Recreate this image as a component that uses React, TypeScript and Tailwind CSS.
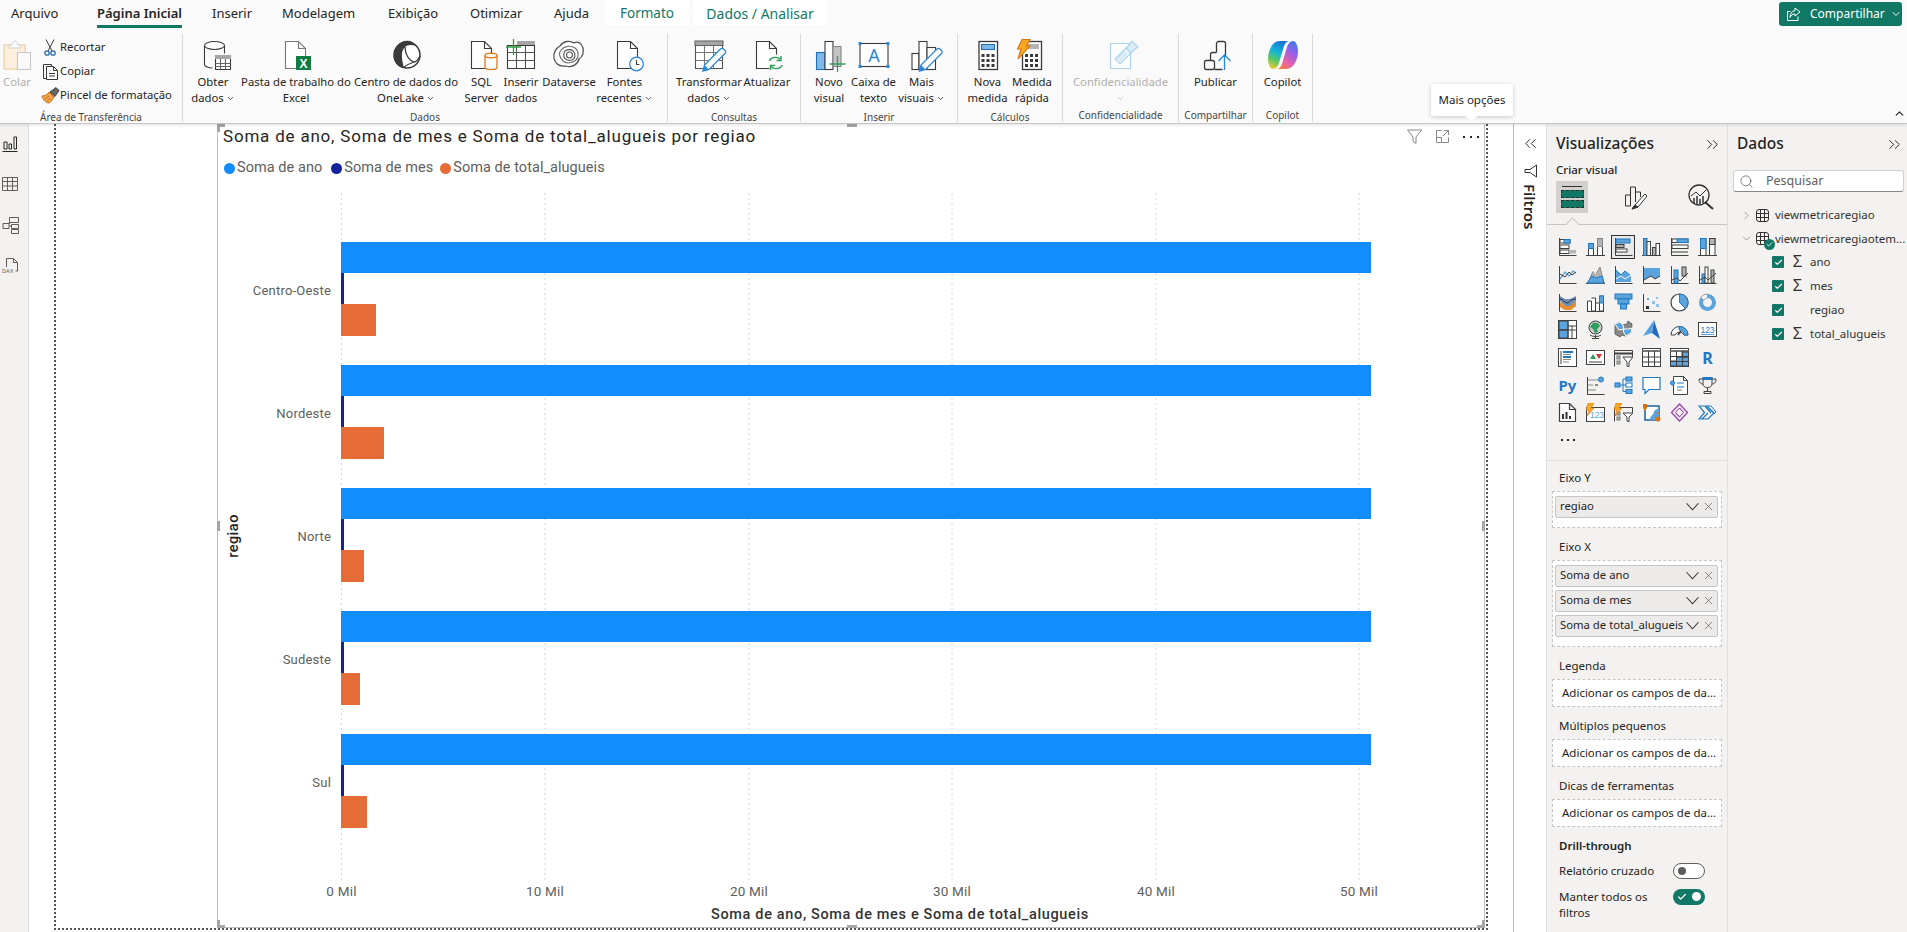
import type { ReactNode } from 'react';
import { ChevronDown, ChevronRight, ChevronUp, ChevronsLeft, ChevronsRight, Search, X, Check } from 'lucide-react';

const S = ({ children, size = 32 }: { children: ReactNode; size?: number }) => (
  <svg className="overflow-visible" width={size} height={size} viewBox={`0 0 ${size} ${size}`} fill="none" stroke="#3b3a39" strokeWidth="1.1">
    {children}
  </svg>
);

const blue = '#2b88d8';
const pageDoc = (x: number, stroke = '#3b3a39') => (
  <path d={`M${x + 0.5} 2.500h13l7 7v20h-20z M${x + 13.5} 2.500v7h7`} fill="#fff" stroke={stroke} />
);
const pencil = (tx: number, ty: number) => (
  <g transform={`translate(${tx} ${ty})`}>
    <path d="M0 0l1.500-6 16-16a2 2 0 013 0l1.500 1.500a2 2 0 010 3l-16 16z" fill="#fff" stroke={blue} strokeWidth="1.300" />
    <path d="M0 0l1.500-6 4.500 4.500z" fill={blue} stroke="none" />
  </g>
);

// ribbon icons
const ObterIcon = (
  <S>
    <path d="M7.500 6.500v19c0 2 4 3.500 8 3.500" fill="#fff" />
    <path d="M27.500 6.500v8" />
    <ellipse cx="17.500" cy="6.500" rx="10" ry="4" fill="#fff" />
    <path d="M18.500 16.500h15v14h-15z" fill="#fff" />
    <path d="M18 16h16v4H18z" fill="#a6a6a6" stroke="none" />
    <path d="M18.500 24.500h15M18.500 27.500h15M23.500 20v10M28.500 20v10" stroke="#666" />
  </S>
);
const ExcelIcon = (
  <S>
    {pageDoc(5, '#777')}
    <rect x="16" y="17" width="15" height="14" fill="#107c41" stroke="none" />
    <text x="23.500" y="28.500" textAnchor="middle" fill="#fff" stroke="none" fontSize="12" fontWeight="700" fontFamily="Liberation Sans, sans-serif">X</text>
  </S>
);
const OneLakeIcon = (
  <S>
    <circle cx="17" cy="16" r="13" fill="#fff" stroke="#3a3a3a" strokeWidth="1.500" />
    <path d="M15 2c5-1 9 1 11 5-5-2-9-1-11 1-4 4-4 10-1 21C7 28 3 22 4 15 5 8 9 3 15 2z" fill="#3a3a3a" stroke="none" />
    <path d="M15 8c0 6 3 13 9 15 2 0 4-2 6-6" stroke="#3a3a3a" strokeWidth="1.300" />
    <path d="M14 28c3-2 7-4 10-5" stroke="#3a3a3a" />
  </S>
);
const SqlIcon = (
  <S>
    {pageDoc(5)}
    <path d="M19 16.500v12c0 1.200 2.500 2 6 2s6-.8 6-2v-12" fill="#fff" stroke="#d9730d" strokeWidth="1.200" />
    <ellipse cx="25" cy="16.500" rx="6" ry="2.300" fill="#fff" stroke="#d9730d" strokeWidth="1.200" />
  </S>
);
const InserirIcon = (
  <S>
    <path d="M2.500 6.500h27v23h-27z" fill="#fff" />
    <rect x="12" y="2" width="18" height="4" fill="#a6a6a6" stroke="none" />
    <path d="M2.500 13.500h27M2.500 21.500h27M11.500 6.500v23M20.500 6.500v23" stroke="#555" />
    <path d="M8.500 0v16M1 8h15" stroke="#2ea043" strokeWidth="1.300" />
  </S>
);
const DataverseIcon = (
  <S>
    <path d="M7 7c3-5 10-6 14-3 3-2 8 0 9 5 1 5-1 9-4 11-1 5-7 9-13 7-6 1-11-2-12-8-1-5 2-10 6-12z" fill="#fff" stroke="#555" strokeWidth="1.300" />
    <path d="M8 11c3-4 10-5 14-2s4 9 1 12-10 4-13 1-5-7-2-11z" stroke="#777" strokeWidth="1.200" />
    <path d="M12 12c3-2 7-2 9 1s1 7-2 8-7 0-8-3 0-4 1-6z" stroke="#555" />
    <circle cx="16.500" cy="16" r="3" stroke="#555" />
  </S>
);
const FontesIcon = (
  <S>
    {pageDoc(8)}
    <circle cx="27.500" cy="25" r="6.800" fill="#fff" stroke={blue} strokeWidth="1.300" />
    <path d="M27.500 21v4.500h3" stroke="#444" />
  </S>
);
const TransformarIcon = (
  <S>
    <path d="M2.500 6.500h27v23h-27z" fill="#fff" stroke="#555" />
    <rect x="2" y="2" width="28" height="4.500" fill="#a6a6a6" stroke="#666" />
    <path d="M2.500 13.500h27M2.500 21.500h27M11.500 6.500v23M20.500 6.500v23" stroke="#777" />
    {pencil(10, 32)}
  </S>
);
const AtualizarIcon = (
  <S>
    {pageDoc(5)}
    <circle cx="24.700" cy="24" r="8.500" fill="#fafafa" stroke="none" />
    <path d="M18.500 22c1-4 8-5 11-1.500M31 26c-1 4-8 5-11 1.500" stroke="#2e9e5b" strokeWidth="1.400" />
    <path d="M30 17v4.500h-4.500M19.500 31v-4.500H24" stroke="#2e9e5b" strokeWidth="1.400" />
  </S>
);
const NovoVisualIcon = (
  <S>
    <rect x="3.500" y="13.500" width="8.500" height="17" fill="#7fb8ea" stroke="#1f6fb5" />
    <rect x="12" y="2.500" width="8" height="28" fill="#fff" />
    <rect x="20" y="7.500" width="8" height="20" fill="#c4c4c4" stroke="#888" />
    <path d="M24.500 17v16M16.500 25h16" stroke="#2e9e5b" strokeWidth="1.300" />
  </S>
);
const TextoIcon = (
  <S>
    <rect x="2" y="4.500" width="28" height="23" fill="#fff" />
    {[[.5, 3], [28.500, 3], [.5, 26], [28.500, 26]].map(([x, y]) => (
      <rect key={`${x}-${y}`} x={x} y={y} width="3" height="3" fill={blue} stroke="none" />
    ))}
    <text x="16" y="22.500" textAnchor="middle" fill={blue} stroke="none" fontSize="18" fontFamily="Noto Sans, sans-serif">A</text>
  </S>
);
const MaisVisuaisIcon = (
  <S>
    <rect x="6" y="14.500" width="7" height="16" fill="#fff" />
    <rect x="13" y="2.500" width="8" height="28" fill="#fff" />
    <rect x="21" y="8.500" width="8.500" height="22" fill="#fff" />
    {pencil(13.500, 32)}
  </S>
);
const keys = [0, 1, 2].flatMap((r) => [0, 1, 2].map((c) => [c, r]));
const NovaMedidaIcon = (
  <S>
    <rect x="7" y="2.500" width="18.500" height="28" fill="#fff" strokeWidth="1.300" />
    <rect x="9.500" y="5.500" width="13" height="5" fill="#7fb8ea" stroke="#1f6fb5" />
    {keys.map(([c, r]) => (
      <rect key={`${c}${r}`} x={9.500 + c * 5} y={15 + r * 5} width="3" height="3" fill="#3b3a39" stroke="none" />
    ))}
  </S>
);
const RapidaIcon = (
  <S>
    <rect x="6.500" y="2.500" width="19" height="28" fill="#fff" strokeWidth="1.300" />
    <rect x="10" y="5" width="13" height="5" fill="#b5b5b5" stroke="none" />
    {keys.map(([c, r]) => (
      <rect key={`${c}${r}`} x={9 + c * 5} y={15 + r * 5} width="3" height="3" fill="#3b3a39" stroke="none" />
    ))}
    <path d="M6 .5h8L10.500 7H14L2 20l3-10H1.500z" fill="#f7a823" stroke="#d9730d" />
  </S>
);
const ConfIcon = (
  <S>
    <path d="M5.500 4.500h20v25h-20z" fill="#fff" stroke="#a8d2ee" strokeWidth="1.200" />
    <path d="M10 20l11-11 5 5-11 11z" fill="#f3f8fc" stroke="#a8d2ee" />
    <path d="M12 20l8-8M14 22l8-8" stroke="#bcdcf2" />
    <path d="M21 9l4-4 2-3 6 6-3 2-4 4z" fill="#dcecf7" stroke="#a8d2ee" />
  </S>
);
const PublicarIcon = (
  <S>
    <rect x="4.500" y="21.500" width="10" height="9" rx="2" fill="#fff" strokeWidth="1.300" />
    <path d="M10.500 21.500v-6a2 2 0 012-2h4M14.500 30.500h8M16.500 13.500v-9a2 2 0 012-2h5a2 2 0 012 2v13" strokeWidth="1.300" />
    <path d="M24.500 31V16M18.500 22l6-6 6 6" stroke={blue} strokeWidth="1.300" />
  </S>
);
const CopilotIcon = (
  <svg width="32" height="32" viewBox="0 0 32 32">
    <defs>
      <linearGradient id="cpa" x1="0.600" y1="0" x2="0.200" y2="1">
        <stop offset="0" stopColor="#1b6fd6" />
        <stop offset="0.400" stopColor="#12b5d8" />
        <stop offset="0.700" stopColor="#5cc765" />
        <stop offset="1" stopColor="#f4c92e" />
      </linearGradient>
      <linearGradient id="cpb" x1="0.800" y1="0" x2="0.200" y2="1">
        <stop offset="0" stopColor="#3a7be8" />
        <stop offset="0.350" stopColor="#9b5fe8" />
        <stop offset="0.700" stopColor="#e860a8" />
        <stop offset="1" stopColor="#f0803c" />
      </linearGradient>
    </defs>
    <path d="M13 2h10c-3 0-5 2-6 5l-5 17c-1 3-3 6-6 6-3 0-5-5-5-10C1 12 5 2 13 2z" fill="url(#cpa)" />
    <path d="M19 30H9c3 0 5-2 6-5l5-17c1-3 3-6 6-6 3 0 5 5 5 10 0 8-4 18-12 18z" fill="url(#cpb)" />
  </svg>
);

// small ribbon icons
const Scissors = (
  <svg width="12" height="17" viewBox="0 0 12 17" fill="none" stroke="#3b3a39">
    <path d="M2 .5l6 11.500M10 .5L4 12" />
    <circle cx="3" cy="14" r="2.200" stroke="#2b6cb0" strokeWidth="1.300" />
    <circle cx="9" cy="14" r="2.200" stroke="#2b6cb0" strokeWidth="1.300" />
  </svg>
);
const CopyDoc = (
  <svg width="17" height="17" viewBox="0 0 17 17" fill="none" stroke="#3b3a39">
    <path d="M4.500 15.500h-3v-14h8v2" />
    <path d="M4.500 3.500h7l4 4v9h-11z M11.500 3.500v4h4 M7 10.500h6M7 13h6" fill="#fff" />
  </svg>
);
const Brush = (
  <svg width="19" height="17" viewBox="0 0 19 17" fill="none">
    <path d="M1 9c3 0 5-1 7-4l5 5c-1 2-3 5-5 6-3 0-6-3-7-7z" fill="#f3a64c" stroke="#c8701a" />
    <path d="M4 12l4-3M6 14l4-3" stroke="#c8701a" />
    <path d="M9 5l6-4.500 3 3-4 6z" fill="#666" stroke="#444" />
  </svg>
);
const Clipboard = (
  <svg width="28" height="32" viewBox="0 0 28 32" fill="none">
    <path d="M1 6h21v24H1z" fill="#fcefdd" stroke="#f2d6ae" strokeWidth="1.500" />
    <path d="M6 6h3c0-2 1-4 3-4s3 2 3 4h3v3H6z" fill="#fafafa" stroke="#cfcfcf" />
    <rect x="14.500" y="13.500" width="13" height="17" fill="#fafafa" stroke="#c8c6c4" />
  </svg>
);

// visualization gallery, 18x18
const L = '#404040';
const B = '#5ba3dd';
const G = '#b3b3b3';
const V = ({ children }: { children: ReactNode }) => (
  <svg width="19" height="19" viewBox="0 0 19 19" fill="none" stroke={L} strokeWidth="1">
    {children}
  </svg>
);
const axisL = <path d="M1.500 1v17.500h17" />;
const gallery: ReactNode[] = [
  <V>{axisL}<rect x="2" y="2.500" width="10" height="3.500" fill="#fff" /><rect x="6" y="2.500" width="6" height="3.500" fill={B} stroke="#1f78c1" /><rect x="2" y="8" width="9" height="3.500" fill="#fff" /><rect x="2" y="13" width="9" height="3.500" fill="#fff" /><rect x="11" y="13" width="7" height="3.500" fill={G} stroke="none" /></V>,
  <V><path d="M0 18.500h19" /><rect x="2.500" y="10.500" width="5" height="8" fill="#fff" /><rect x="2.500" y="6.500" width="5" height="5" fill={B} stroke="#1f78c1" /><rect x="11.500" y="1.500" width="5" height="17" fill="#fff" /><rect x="11.500" y="1.500" width="5" height="8" fill={G} stroke="#888" /></V>,
  <V>{axisL}<rect x="2" y="2" width="14" height="4" fill={B} stroke="#1f78c1" /><rect x="2" y="7.500" width="8" height="3" fill={G} /><rect x="2" y="12" width="11" height="3" fill="#fff" /></V>,
  <V><path d="M0 18.500h19" /><rect x="1.500" y="1.500" width="3.500" height="17" fill={B} stroke="#1f78c1" /><rect x="5" y="4.500" width="3.500" height="14" fill="#fff" /><rect x="10.500" y="10.500" width="3.500" height="8" fill={G} /><rect x="14" y="6.500" width="3.500" height="12" fill="#fff" /></V>,
  <V>{axisL}<rect x="2" y="2" width="16" height="3.500" fill="#fff" /><rect x="7" y="2" width="11" height="3.500" fill={B} stroke="#1f78c1" /><rect x="2" y="8" width="16" height="3.500" fill="#fff" /><path d="M2 15h16" /></V>,
  <V><path d="M0 18.500h19" /><rect x="2.500" y="1.500" width="5.500" height="17" fill="#fff" /><rect x="2.500" y="1.500" width="5.500" height="10" fill={B} stroke="#1f78c1" /><rect x="11.500" y="1.500" width="5.500" height="17" fill="#fff" /><rect x="11.500" y="1.500" width="5.500" height="6" fill={G} /></V>,
  <V>{axisL}<path d="M2 14l5-7 4 4 4-5 3 2" stroke={B} strokeWidth="1.300" /><path d="M2 9l5 3 4-5 3 3 4-3" /></V>,
  <V><path d="M0 18.500h19" /><path d="M2 18l5-12 3 3 4-7 4 16z" fill={G} stroke="#888" /><path d="M1 18l5-7 4 2 6-2 2 7z" fill={B} stroke="#1f78c1" /><path d="M5 8l2-3 3 4" stroke="#fff" /></V>,
  <V><path d="M1.500 1v17.500h17" /><path d="M2 5l5 5 4-4 6 5v6H2z" fill={B} stroke="none" /><path d="M2 5l5 5 4-4 6 5" stroke="#1f78c1" /><path d="M2 14l5-3 4 3 6-4" stroke="#fff" /></V>,
  <V><path d="M1.500 1v17.500h17" /><path d="M2 3h16v8l-5 3-4-3-7 4z" fill={B} stroke="none" /><path d="M2 15l7-4 4 3 5-3" stroke={L} /></V>,
  <V>{axisL}<rect x="4" y="5" width="4" height="13" fill={B} stroke="#1f78c1" /><rect x="12" y="2" width="4" height="9" fill={G} /><path d="M2 15l5-2 3 3 8-8" /></V>,
  <V>{axisL}<rect x="4" y="9" width="3" height="9" fill={B} stroke="#1f78c1" /><rect x="7" y="2" width="3" height="16" fill="#fff" /><rect x="13" y="5" width="3" height="13" fill={G} /><path d="M2 15l5-3 3 3 8-7" /></V>,
  <V>{axisL}<path d="M2 3l5 3h5l6-3v5l-5 5H7L2 8z" fill="#6d8fb5" stroke="none" /><path d="M2 9l5 4h5l6-5v5l-5 4H7l-5-3z" fill="#e88a2d" stroke="none" /><path d="M2 6c4 0 4 4 7 4s3-4 9-4" stroke="#333" /></V>,
  <V><path d="M1 18.500h17" /><path d="M1.500 18V8h4v10 M5.500 5h4v13h-4 M9.500 10h4v8 M13.500 3h4v15h-4" fill="#fff" /><rect x="13.500" y="3" width="4" height="7" fill={B} stroke="#1f78c1" /></V>,
  <V><rect x="1" y="1" width="17" height="5" fill={B} stroke="#1f78c1" /><rect x="4" y="6" width="11" height="5" fill={B} stroke="#1f78c1" /><rect x="6.500" y="11" width="6" height="5" fill={B} stroke="#1f78c1" /></V>,
  <V>{axisL}<rect x="4" y="13" width="3" height="3" fill="#333" stroke="none" /><rect x="5" y="5" width="2" height="2" fill={B} stroke="none" /><rect x="10" y="8" width="3" height="3" fill="#8fc1ea" stroke="none" /><rect x="14" y="4" width="2" height="2" fill="#8fc1ea" stroke="none" /><rect x="14" y="11" width="3" height="3" fill="#8fc1ea" stroke="none" /></V>,
  <V><circle cx="9.500" cy="9.500" r="8.500" fill="#fff" strokeWidth="1.200" /><path d="M9.500 9.500V1a8.500 8.500 0 016 14.500z" fill={B} stroke="#1f78c1" /></V>,
  <V><circle cx="9.500" cy="9.500" r="6.500" stroke={B} strokeWidth="4" /><path d="M9.500 1a8.500 8.500 0 00-7 4l3.500 2a4.500 4.500 0 013.500-2z" fill="#fff" stroke="#999" /></V>,
  <V><rect x=".5" y=".5" width="18" height="18" fill="#fff" /><rect x="1" y="1" width="9" height="9" fill={B} /><rect x="1" y="10" width="9" height="8" fill={B} /><path d="M10 .5v18M.5 10h18M10 6h8M14 6v12" /></V>,
  <V><circle cx="9.500" cy="7.500" r="6.500" fill="#cfcfcf" /><path d="M7 3c3-1 6 0 7 3l-3 3 1 3-3 1-2-4-3-2z" fill="#2e9e5b" stroke="none" /><path d="M4 15c3 2 8 2 11 0M9.500 15v3M6 18.500h7" /></V>,
  <V><path d="M1 4l5-2 3 3 4-1 1-3 4 3-1 9-5 3-4-1-2 2-5-3z" fill="#8a8886" stroke="#666" /><path d="M1 4l5-2 3 3 1 4-5 1z" fill={B} stroke="#fff" /><path d="M9 9h6l3-1-1 5-5 3-2-3z" fill={B} stroke="#fff" /></V>,
  <V><path d="M12 0l6 19-8-6z" fill="#1f6ec1" stroke="none" /><path d="M12 0L1 16l9-3z" fill="#5ba3dd" stroke="none" /></V>,
  <V><path d="M1 15a8.500 8.500 0 0117 0h-4a5 5 0 00-9 0z" fill="#fff" /><path d="M9 6.500a8.500 8.500 0 019 8.500h-4a5 5 0 00-5-5z" fill={B} stroke="#1f78c1" /><path d="M8 15l3-4" strokeWidth="1.500" /></V>,
  <V><rect x=".5" y="2.500" width="18" height="14" fill="#fff" /><text x="9.500" y="12.500" textAnchor="middle" fontSize="8.500" fill="#1f78c1" stroke="none" fontFamily="Liberation Sans, sans-serif">123</text><path d="M3 14.500h13" stroke={B} /></V>,
  <V><rect x=".5" y=".5" width="18" height="18" fill="#fff" /><path d="M3 3v13" /><path d="M5 4h10M5 9h8" stroke="#1f78c1" strokeWidth="2" /><path d="M5 6.500h8M5 11.500h8M5 14h6" stroke="#888" /></V>,
  <V><rect x=".5" y="2.500" width="18" height="14" fill="#fff" /><path d="M4 11l3-5 3 5z" fill="#2e9e5b" stroke="none" /><path d="M10 6h6l-3 5z" fill="#d13438" stroke="none" /><path d="M3 14h13" /></V>,
  <V><path d="M.5 18.500v-16h18v6" /><path d="M.5 5.500h18" strokeWidth="2" /><rect x="3" y="8" width="3" height="3" fill="#bbb" stroke="#777" /><rect x="3" y="13" width="3" height="3" fill="#bbb" stroke="#777" /><path d="M9 9h10l-4 5v5l-2-1v-4z" fill="#fff" /></V>,
  <V><rect x=".5" y=".5" width="18" height="18" fill="#fff" /><path d="M.5 3h18" strokeWidth="2" stroke="#777" /><path d="M.5 9h18M.5 14h18M6.500 3v15M12.500 3v15" /></V>,
  <V><rect x=".5" y=".5" width="18" height="18" fill="#fff" /><path d="M.5 3h18" strokeWidth="2" stroke="#777" /><rect x="6.500" y="9" width="12" height="9" fill={B} /><rect x="12" y="4" width="6.500" height="5" fill={B} /><rect x=".5" y="13" width="6" height="5" fill={B} /><path d="M.5 8.500h18M.5 13.500h18M6.500 3v15M12.500 3v15" /></V>,
  <V><text x="9.500" y="16" textAnchor="middle" fontSize="16" fontWeight="700" fill="#1f78c1" stroke="none" fontFamily="Noto Sans, sans-serif">R</text></V>,
  <V><text x="9.500" y="14.500" textAnchor="middle" fontSize="15" fontWeight="700" fill="#1f78c1" stroke="none" fontFamily="Noto Sans, sans-serif">Py</text></V>,
  <V>{axisL}<path d="M2 4h11M2 9h5M2 14h8" stroke="#888" /><circle cx="15" cy="3.500" r="2.500" fill={B} stroke="#1f78c1" /><rect x="9" y="8" width="3" height="2" fill="#888" stroke="none" /></V>,
  <V><rect x="1" y="7" width="5" height="4" fill={B} stroke="#1f78c1" /><rect x="12" y="1" width="6" height="4" fill={B} stroke="#1f78c1" /><rect x="12" y="7" width="6" height="4" fill="#fff" stroke="#1f78c1" /><rect x="12" y="13.500" width="6" height="4" fill={B} stroke="#1f78c1" /><path d="M6 9h6M9 3v12.500M9 3h3M9 15.500h3" stroke="#1f78c1" /></V>,
  <V><path d="M1 1.500h17v12H7l-4 4v-4H1z" fill="#fff" stroke="#1f78c1" strokeWidth="1.200" /></V>,
  <V><path d="M3.500.5h10l4 4v14h-14z M13.500.5v4h4" fill="#fff" /><circle cx="2.500" cy="7" r="2" fill={B} stroke="#1f78c1" /><path d="M7 7h7M7 11h7" stroke="#1f78c1" /><path d="M7 14h5" stroke="#777" /></V>,
  <V><path d="M5 1.500h9v6c0 3-2 4-4.500 4S5 10.500 5 7.500zM5 3H1c0 4 2 5 4 5M14 3h4c0 4-2 5-4 5M9.500 12v3M6 15.500h7v2H6z" /><rect x="5" y="1.500" width="9" height="2" fill="#1f78c1" stroke="#1f78c1" /></V>,
  <V><path d="M1.500.5h10l6 6v12h-16z M11.500.5v6h6" fill="#fff" strokeWidth="1.200" /><path d="M5 11v5M8.500 9v7M12 13v3" stroke="#333" strokeWidth="2" /></V>,
  <V><rect x=".5" y="4.500" width="18" height="14" fill="#fff" /><text x="11" y="15" textAnchor="middle" fontSize="8.500" fill="#5ba3dd" stroke="none" fontFamily="Liberation Sans, sans-serif">123</text><path d="M2 0h6L5 5h3L1 13l2-6H0z" fill="#f7a823" stroke="#d9730d" strokeWidth=".6" /></V>,
  <V><path d="M.5 18.500v-14h18v5" /><rect x="3" y="9" width="3" height="3" fill="#bbb" stroke="#777" /><rect x="3" y="14" width="3" height="3" fill="#bbb" stroke="#777" /><path d="M9 10h10l-4 4v5l-2-1v-4z" fill="#fff" /><path d="M2 0h6L5 5h3L1 13l2-6H0z" fill="#f7a823" stroke="#d9730d" strokeWidth=".6" /></V>,
  <V><path d="M3 3h14v14H3z" fill="#fff" stroke="#1f5f9f" strokeWidth="1.500" /><path d="M8 17c0-5 3-4 4-8 1-3 3-3 5-3v11z" fill="#5ba3dd" stroke="none" /><path d="M1 1h4v4L3 8 1 5z" fill="#d9730d" stroke="none" /><circle cx="16" cy="16" r="2.500" fill="#d9730d" stroke="none" /><rect x="16" y="9" width="2" height="2" fill="#d9730d" stroke="none" /></V>,
  <V><path d="M9.500 1l8 8.500-8 8.500-8-8.500z" stroke="#9a3fae" strokeWidth="1.300" /><path d="M9.500 5l4 4.500-4 4.500-4-4.500zM5.500 9.500l4 4.500M13.500 9.500l-4-4.500" stroke="#9a3fae" /></V>,
  <V><path d="M1 3h8l7 7-6 6H1l5.500-6.500zM7 3l6 7M4 16l6-6" stroke="#1f78c1" strokeWidth="1.200" /><path d="M9 3h4l5 6-2 2z" stroke="#1f78c1" /></V>,
];

const Sigma = () => <span className="w-[13px] text-center font-['Liberation_Sans',sans-serif] text-[16px] leading-none text-[#323130]">Σ</span>;

const TableGlyph = () => (
  <svg width="13" height="13" viewBox="0 0 13 13" fill="none" stroke="#323130">
    <rect x=".5" y=".5" width="12" height="12" rx="2.500" />
    <path d="M4.500.5v12M8.500.5v12M.5 4.500h12M.5 8.500h12" />
  </svg>
);

const Thin = ({ d, size = 12, stroke = '#605e5c' }: { d: string; size?: number; stroke?: string }) => (
  <svg width={size} height={size} viewBox="0 0 12 12" fill="none" stroke={stroke} strokeWidth="1">
    <path d={d} />
  </svg>
);

function RibbonBtn({ w, lines, icon, more, off }: { w: number; lines: string[]; icon: ReactNode; more?: boolean; off?: boolean }) {
  return (
    <div className="flex shrink-0 flex-col items-center" style={{ width: w }}>
      <div className="mb-[2px] flex h-[34px] items-center justify-center">{icon}</div>
      {lines.map((t, i) => (
        <div key={t} className={`flex h-4 items-center whitespace-nowrap text-[11.3px] ${off ? 'text-[#b3b0ad]' : 'text-[#252423]'}`}>
          {t}
          {more && i === lines.length - 1 && <ChevronDown size={9} strokeWidth={2} className="ml-[2px]" />}
        </div>
      ))}
    </div>
  );
}

function GroupLabel({ label }: { label: string }) {
  return <div className="mt-[4px] h-[14px] text-center text-[10px] leading-[14px] text-[#484644]">{label}</div>;
}

function Group({ w, pl = 0, label, children, center }: { w: number; pl?: number; label: string; children: ReactNode; center?: boolean }) {
  return (
    <div className="flex h-[88px] shrink-0 flex-col border-r border-[#d9d9d9]" style={{ width: w }}>
      <div className={`flex h-[72px] pt-[4px] ${center ? 'justify-center' : ''}`} style={{ paddingLeft: pl }}>
        {children}
      </div>
      <GroupLabel label={label} />
    </div>
  );
}

function Field({ label }: { label: string }) {
  return (
    <div className="mx-[2px] mb-[3px] flex h-[22px] w-[163px] items-center rounded-[2px] border border-[#c8c6c4] bg-[#edebe9] pl-1 text-[11.3px] text-[#252423]">
      <span className="flex-1 whitespace-nowrap">{label}</span>
      <Thin d="M.5 3l5.500 6 5.500-6" size={13} stroke="#323130" />
      <X size={13} strokeWidth={1} className="ml-[3px] mr-[2px] text-[#323130]" />
    </div>
  );
}

const tabs: [string, string][] = [
  ['Arquivo', 'ml-[11px] w-[86px]'],
  ['Página Inicial', 'w-[115px]'],
  ['Inserir', 'w-[70px]'],
  ['Modelagem', 'w-[106px]'],
  ['Exibição', 'w-[82px]'],
  ['Otimizar', 'w-[84px]'],
  ['Ajuda', 'w-[51px]'],
];

const regions = [
  { name: 'Centro-Oeste', end: 376 },
  { name: 'Nordeste', end: 384 },
  { name: 'Norte', end: 364 },
  { name: 'Sudeste', end: 360 },
  { name: 'Sul', end: 367 },
];
const ticks = [
  ['0 Mil', 341.5],
  ['10 Mil', 545],
  ['20 Mil', 749],
  ['30 Mil', 952],
  ['40 Mil', 1156],
  ['50 Mil', 1359],
] as const;

const chartFont = 'Roboto, sans-serif';

export default function App() {
  return (
    <div className="flex h-[932px] w-[1907px] flex-col overflow-hidden bg-white font-['Noto_Sans',sans-serif] text-[#252423]">
      {/* ribbon */}
      <div className="relative z-10 shrink-0 border-b border-[#c8c6c4] bg-[#fafafa] shadow-[0_1px_3px_rgba(0,0,0,0.12)]">
        <div className="flex h-[34px] items-start">
          {tabs.map(([t, cls]) => (
            <div key={t} className={`flex h-[28px] shrink-0 items-center text-[13px] ${cls}`}>
              {t === 'Página Inicial' ? (
                <span className="flex h-[28px] items-center border-b-[3px] border-[#117865] pt-[3px] font-semibold">{t}</span>
              ) : (
                t
              )}
            </div>
          ))}
          <div className="flex h-[26px] w-[84px] shrink-0 items-center bg-white pl-[15px] text-[13.5px] text-[#117865]">Formato</div>
          <div className="ml-[4px] flex h-[26px] w-[134px] shrink-0 items-center justify-center bg-white text-[14px] text-[#117865]">Dados / Analisar</div>
          <div className="ml-auto mr-[5px] mt-[2px] flex h-[24px] w-[123px] items-center rounded-[3px] bg-[#117865] pl-[7px] text-[12px] text-white">
            <svg width="15" height="15" viewBox="0 0 15 15" fill="none" stroke="#fff">
              <path d="M12 9.500v4H1.500v-9h3" />
              <path d="M9 1l5 4-5 4V7C6 7 5 8.500 4 10.500 4 6.500 6 4 9 3.500z" />
            </svg>
            <span className="ml-[9px]">Compartilhar</span>
            <ChevronDown size={12} className="ml-[5px]" />
          </div>
        </div>

        <div className="flex h-[89px] items-start">
          <div className="flex h-[88px] w-[183px] shrink-0 flex-col border-r border-[#d9d9d9]">
            <div className="flex h-[72px] pl-[3px] pt-[4px]">
              <RibbonBtn w={28} lines={['Colar']} icon={Clipboard} off />
              <div className="ml-[9px] flex -translate-y-[3px] flex-col">
                <div className="flex h-[24px] shrink-0 items-center text-[11.3px]">
                  <span className="flex w-[20px] justify-center">{Scissors}</span>Recortar
                </div>
                <div className="flex h-[24px] shrink-0 items-center text-[11.3px]">
                  <span className="flex w-[20px] justify-center">{CopyDoc}</span>Copiar
                </div>
                <div className="flex h-[24px] shrink-0 items-center whitespace-nowrap text-[11.3px]">
                  <span className="flex w-[20px] justify-center">{Brush}</span>Pincel de formatação
                </div>
              </div>
            </div>
            <GroupLabel label="Área de Transferência" />
          </div>
          <Group w={485} pl={7} label="Dados">
            <RibbonBtn w={46} lines={['Obter', 'dados']} icon={ObterIcon} more />
            <RibbonBtn w={120} lines={['Pasta de trabalho do', 'Excel']} icon={ExcelIcon} />
            <RibbonBtn w={100} lines={['Centro de dados do', 'OneLake']} icon={OneLakeIcon} more />
            <div className="w-[6px]" />
            <RibbonBtn w={39} lines={['SQL', 'Server']} icon={SqlIcon} />
            <RibbonBtn w={40} lines={['Inserir', 'dados']} icon={InserirIcon} />
            <RibbonBtn w={56} lines={['Dataverse']} icon={DataverseIcon} />
            <RibbonBtn w={55} lines={['Fontes', 'recentes']} icon={FontesIcon} more />
          </Group>
          <Group w={133} pl={10} label="Consultas">
            <RibbonBtn w={62} lines={['Transformar', 'dados']} icon={TransformarIcon} more />
            <RibbonBtn w={54} lines={['Atualizar']} icon={AtualizarIcon} />
          </Group>
          <Group w={157} pl={6} label="Inserir">
            <RibbonBtn w={44} lines={['Novo', 'visual']} icon={NovoVisualIcon} />
            <RibbonBtn w={45} lines={['Caixa de', 'texto']} icon={TextoIcon} />
            <RibbonBtn w={51} lines={['Mais', 'visuais']} icon={MaisVisuaisIcon} more />
          </Group>
          <Group w={105} pl={7} label="Cálculos">
            <RibbonBtn w={45} lines={['Nova', 'medida']} icon={NovaMedidaIcon} />
            <RibbonBtn w={44} lines={['Medida', 'rápida']} icon={RapidaIcon} />
          </Group>
          <Group w={116} label="Confidencialidade" center>
            <div className="flex flex-col items-center">
              <RibbonBtn w={100} lines={['Confidencialidade']} icon={ConfIcon} off />
              <ChevronDown size={9} className="mt-[4px] text-[#b3b0ad]" />
            </div>
          </Group>
          <Group w={74} label="Compartilhar" center>
            <RibbonBtn w={60} lines={['Publicar']} icon={PublicarIcon} />
          </Group>
          <Group w={60} label="Copilot" center>
            <RibbonBtn w={50} lines={['Copilot']} icon={CopilotIcon} />
          </Group>
          <ChevronUp size={13} strokeWidth={2.5} className="ml-auto mr-[1px] mt-[73px] text-[#323130]" />
        </div>
      </div>

      <div className="flex min-h-0 flex-1">
        {/* left rail */}
        <div className="flex w-[29px] shrink-0 flex-col gap-[24px] border-r border-[#e1dfdd] bg-[#f3f2f1] pl-[2px] pt-[12px]">
          <svg width="16" height="16" viewBox="0 0 16 16" fill="none" stroke="#252423">
            <path d="M.5 15.500h15M2 13V6h3v7zM7 13V8h2.500v5zM12 13V1h2.500v12z" />
          </svg>
          <svg width="16" height="16" viewBox="0 0 16 16" fill="none" stroke="#605e5c">
            <path d="M.5 1.500h15v13H.5zM.5 5.500h15M.5 10h15M5.500 1.500v13M10.500 1.500v13" />
          </svg>
          <svg width="18" height="18" viewBox="0 0 18 18" fill="none" stroke="#605e5c">
            <path d="M7.500 1.500h9v5h-9zM1 7.500h6v5H1zM9.500 8.500h7v4h-7zM9.500 13.500h7v4h-7zM7 10h2.500M7.500 4v4" />
          </svg>
          <svg width="17" height="17" viewBox="0 0 17 17" fill="none" stroke="#605e5c">
            <path d="M4.500 9V.5h7l4 4V13h-2M11.500.5v4h4" />
            <text x="0" y="15" fontSize="5.500" fill="#605e5c" stroke="none" fontFamily="Liberation Sans, sans-serif">DAX</text>
          </svg>
        </div>

        {/* report canvas */}
        <div className="relative min-w-0 flex-1 bg-white">
          {/* selection outline */}
          <div className="absolute bottom-[2px] left-[25px] right-[25px] top-0 border-[2px] border-t-0 border-dotted border-[#555]" />
          {/* visual */}
          <div className="absolute bottom-[4px] left-[188px] right-[28px] top-0 border-x border-b border-[#bfbfbf] bg-white">
            <svg className="absolute left-[-1px] top-0" width="1268" height="804" viewBox="217 124 1268 804" style={{ fontFamily: chartFont }}>
              {ticks.map(([label, x]) => (
                <g key={label}>
                  <line x1={x} x2={x} y1="193" y2="880" stroke="#d6d6d6" strokeDasharray="2 3" />
                  <text x={x} y="896" textAnchor="middle" fontSize="13.500" letterSpacing=".2" fill="#605e5c">
                    {label}
                  </text>
                </g>
              ))}
              {regions.map((r, i) => (
                <g key={r.name}>
                  <rect x="341" y={242 + i * 123} width="1030" height="31" fill="#118dff" />
                  <rect x="341" y={273 + i * 123} width="3" height="31" fill="#12239e" />
                  <rect x="341" y={304 + i * 123} width={r.end - 341} height="32" fill="#e66c37" />
                  <text x="331" y={295 + i * 123} textAnchor="end" fontSize="13" letterSpacing=".2" fill="#605e5c">
                    {r.name}
                  </text>
                </g>
              ))}
              <text x="900" y="919" textAnchor="middle" fontSize="14.500" fontWeight="500" letterSpacing=".65" fill="#333">
                Soma de ano, Soma de mes e Soma de total_alugueis
              </text>
              <text transform="translate(238 536) rotate(-90)" textAnchor="middle" fontSize="14.500" fontWeight="500" letterSpacing=".5" fill="#252423">
                regiao
              </text>
            </svg>
            <div className="absolute left-[5px] top-[2px] whitespace-nowrap font-['Roboto',sans-serif] text-[17px] leading-[20px] tracking-[0.8px] text-[#252423]">
              Soma de ano, Soma de mes e Soma de total_alugueis por regiao
            </div>
            <div className="absolute left-[6px] top-[35px] flex items-center whitespace-nowrap font-['Roboto',sans-serif] text-[14.5px] leading-[18px] tracking-[0.05px] text-[#605e5c]">
              <span className="mr-[2px] h-[11px] w-[11px] rounded-full bg-[#118dff]" />
              <span className="mr-[9px]">Soma de ano</span>
              <span className="mr-[2px] h-[11px] w-[11px] rounded-full bg-[#12239e]" />
              <span className="mr-[7px]">Soma de mes</span>
              <span className="mr-[2px] h-[11px] w-[11px] rounded-full bg-[#e66c37]" />
              <span>Soma de total_alugueis</span>
            </div>
            {/* visual header */}
            <div className="absolute right-[5px] top-[5px] flex items-center gap-[13px]">
              <svg width="15" height="15" viewBox="0 0 15 15" fill="none" stroke="#8a8886">
                <path d="M.5 1h14L9 8v6.500l-3-2V8z" />
              </svg>
              <svg width="15" height="15" viewBox="0 0 15 15" fill="none" stroke="#8a8886">
                <path d="M6.500 1.500h-5v12h12v-5M1.500 8.500h5v5M9 1.500h4.500V6M13.500 1.500L8 7" />
              </svg>
              <div className="flex w-[16px] justify-between">
                <span className="h-[2px] w-[2px] bg-[#252423]" />
                <span className="h-[2px] w-[2px] bg-[#252423]" />
                <span className="h-[2px] w-[2px] bg-[#252423]" />
              </div>
            </div>
            {/* resize handles */}
            <div className="absolute left-[-1px] top-0 h-[8px] w-[8px] border-l-[3px] border-t-[3px] border-[#a6a6a6]" />
            <div className="absolute bottom-[-1px] left-[-1px] h-[8px] w-[8px] border-b-[3px] border-l-[3px] border-[#a6a6a6]" />
            <div className="absolute bottom-[-1px] right-[-1px] h-[8px] w-[8px] border-b-[3px] border-r-[3px] border-[#a6a6a6]" />
            <div className="absolute left-[629px] top-0 h-[3px] w-[10px] bg-[#a6a6a6]" />
            <div className="absolute bottom-[-1px] left-[629px] h-[3px] w-[10px] bg-[#a6a6a6]" />
            <div className="absolute left-[-1px] top-[397px] h-[10px] w-[3px] bg-[#a6a6a6]" />
            <div className="absolute right-[-1px] top-[397px] h-[10px] w-[3px] bg-[#a6a6a6]" />
          </div>
        </div>

        {/* filters */}
        <div className="flex w-[33px] shrink-0 flex-col items-center border-l border-[#b8b8b8] bg-white pt-[10px] text-[#252423]">
          <ChevronsLeft size={19} strokeWidth={1.2} />
          <svg className="mt-[11px]" width="13" height="14" viewBox="0 0 13 14" fill="none" stroke="#323130">
            <path d="M12.500 1v12L6 8.500H1L1 5.500h5z" />
          </svg>
          <div className="mt-[6px] text-[15px] font-semibold [writing-mode:vertical-rl]">Filtros</div>
        </div>

        {/* visualizations */}
        <div className="w-[182px] shrink-0 border-x border-[#e1dfdd] bg-[#f3f2f1]">
          <div className="flex h-[40px] items-center justify-between pl-[9px] pr-[5px]">
            <span className="text-[15.5px] font-medium">Visualizações</span>
            <ChevronsRight size={19} strokeWidth={1.2} />
          </div>
          <div className="h-[14px] pl-[9px] text-[11.5px] font-medium leading-[12px]">Criar visual</div>
          <div className="mt-[3px] flex h-[32px] items-center pl-[9px]">
            <div className="flex h-[32px] w-[32px] flex-col items-center justify-center gap-[2px] bg-[#d2d0ce]">
              <div className="mb-[1px] h-px w-[20px] bg-[#323130]" />
              <div className="h-[8px] w-[23px] border border-dashed border-[#323130] bg-[#117865]" />
              <div className="h-[8px] w-[23px] border border-dashed border-[#323130] bg-[#117865]" />
            </div>
            <svg className="ml-[36px]" width="24" height="26" viewBox="0 0 24 26" fill="none" stroke="#323130">
              <path d="M1.500 22v-11h5V3h5v5h5v5M6.500 11v11h-5M11.500 8v10" />
              <path d="M8 25l3-4 10-11 2 2-9 11z" fill="#fff" />
              <path d="M8 25l6-2-3-2z" fill="#323130" />
            </svg>
            <svg className="ml-[40px]" width="26" height="26" viewBox="0 0 26 26" fill="none" stroke="#323130">
              <circle cx="11" cy="11" r="10" strokeWidth="1.300" />
              <path d="M17 18l8 7" strokeWidth="2" />
              <path d="M3 12l5-4 4 4 6-6" />
              <path d="M6 19v-5M9 20v-8M12 20v-5M15 19v-7" strokeWidth="1.500" />
            </svg>
          </div>
          <div className="relative mt-[11px] h-px bg-[#c8c6c4]">
            <div className="absolute left-[21px] top-[-5px] h-[9px] w-[9px] rotate-45 border-l border-t border-[#c8c6c4] bg-[#f3f2f1]" />
          </div>
          <div className="ml-[6px] mt-[8px] grid grid-cols-[repeat(6,28px)] auto-rows-[27.7px]">
            {gallery.map((g, i) => (
              <div key={i} className="flex items-center justify-center">
                <div className={i === 2 ? 'flex h-[24px] w-[24px] items-center justify-center border-[1.5px] border-[#323130] bg-[#e8e8e8]' : 'flex'}>{g}</div>
              </div>
            ))}
          </div>
          <div className="ml-[14px] flex h-[26px] w-[14px] items-center justify-between">
            <span className="h-[2px] w-[2px] bg-[#252423]" />
            <span className="h-[2px] w-[2px] bg-[#252423]" />
            <span className="h-[2px] w-[2px] bg-[#252423]" />
          </div>
          <div className="mt-[7px] h-px bg-[#e1dfdd]" />

          <div className="ml-[12px] mt-[9px] h-[16px] text-[11.5px] leading-[16px]">Eixo Y</div>
          <div className="mx-[5px] mt-[5px] w-[170px] border border-dashed border-[#c8c6c4] bg-white pb-[6px] pt-[4px]">
            <Field label="regiao" />
          </div>
          <div className="ml-[12px] mt-[11px] h-[16px] text-[11.5px] leading-[16px]">Eixo X</div>
          <div className="mx-[5px] mt-[5px] w-[170px] border border-dashed border-[#c8c6c4] bg-white pb-[6px] pt-[4px]">
            <Field label="Soma de ano" />
            <Field label="Soma de mes" />
            <Field label="Soma de total_alugueis" />
          </div>
          {['Legenda', 'Múltiplos pequenos', 'Dicas de ferramentas'].map((t) => (
            <div key={t}>
              <div className="ml-[12px] mt-[11px] h-[16px] text-[11.5px] leading-[16px]">{t}</div>
              <div className="mx-[5px] mt-[5px] flex h-[28px] w-[170px] items-center whitespace-nowrap border border-dashed border-[#c8c6c4] bg-white pl-[9px] text-[11.5px]">
                Adicionar os campos de da...
              </div>
            </div>
          ))}
          <div className="ml-[12px] mt-[11px] h-[16px] text-[11.5px] font-semibold leading-[16px]">Drill-through</div>
          <div className="mt-[9px] flex h-[16px] items-center pl-[12px] pr-[22px] text-[11.5px]">
            <span className="flex-1">Relatório cruzado</span>
            <div className="flex h-[16px] w-[32px] items-center rounded-full border border-[#605e5c] bg-white pl-[4px]">
              <span className="h-[8px] w-[8px] rounded-full bg-[#605e5c]" />
            </div>
          </div>
          <div className="mt-[10px] flex pl-[12px] pr-[22px] text-[11.5px] leading-[16px]">
            <span className="w-[115px]">Manter todos os filtros</span>
            <div className="ml-auto flex h-[16px] w-[32px] items-center justify-between rounded-full bg-[#117865] px-[4px]">
              <Check size={10} strokeWidth={3} className="text-white" />
              <span className="h-[9px] w-[9px] rounded-full bg-white" />
            </div>
          </div>
        </div>

        {/* data */}
        <div className="w-[179px] shrink-0 bg-[#f3f2f1]">
          <div className="flex h-[40px] items-center justify-between pl-[9px] pr-[3px]">
            <span className="text-[15.5px] font-medium">Dados</span>
            <ChevronsRight size={19} strokeWidth={1.2} />
          </div>
          <div className="mx-[5px] mt-[6px] flex h-[22px] w-[171px] items-center gap-[12px] rounded-[3px] border border-[#d2d0ce] border-b-[#8a8886] bg-white pl-[5px] text-[12.5px] text-[#605e5c]">
            <Search size={15} strokeWidth={1.2} />
            Pesquisar
          </div>
          <div className="mt-[11px] flex h-[24px] items-center pl-[12px] text-[11.5px] text-[#323130]">
            <ChevronRight size={13} strokeWidth={1} className="mr-[3px] text-[#605e5c]" />
            <TableGlyph />
            <span className="ml-[6px]">viewmetricaregiao</span>
          </div>
          <div className="relative flex h-[23px] items-center pl-[12px] text-[11.5px] text-[#323130]">
            <ChevronDown size={13} strokeWidth={1} className="mr-[3px] text-[#605e5c]" />
            <TableGlyph />
            <span className="ml-[6px] whitespace-nowrap">viewmetricaregiaotem...</span>
            <span className="absolute left-[36px] top-[12px] flex h-[11px] w-[11px] items-center justify-center rounded-full bg-[#117865]">
              <Check size={7} strokeWidth={3} className="text-white" />
            </span>
          </div>
          {[
            ['ano', true],
            ['mes', true],
            ['regiao', false],
            ['total_alugueis', true],
          ].map(([t, sum]) => (
            <div key={t as string} className="flex h-[24px] items-center pl-[44px] text-[11.5px] text-[#323130]">
              <span className="flex h-[12px] w-[12px] items-center justify-center rounded-[1px] bg-[#117865]">
                <Check size={9} strokeWidth={3} className="text-white" />
              </span>
              <span className="ml-[7px] flex w-[19px]">{sum ? <Sigma /> : null}</span>
              <span>{t as string}</span>
            </div>
          ))}
        </div>
      </div>

      {/* tooltip */}
      <div className="absolute left-[1431px] top-[84px] z-20 flex h-[32px] w-[82px] items-center justify-center rounded-[2px] bg-white text-[11.5px] text-[#252423] shadow-[0_1px_4px_rgba(0,0,0,0.2)]">
        Mais opções
        <div className="absolute left-[36px] top-[27px] h-[9px] w-[9px] rotate-45 bg-white" />
      </div>
    </div>
  );
}
